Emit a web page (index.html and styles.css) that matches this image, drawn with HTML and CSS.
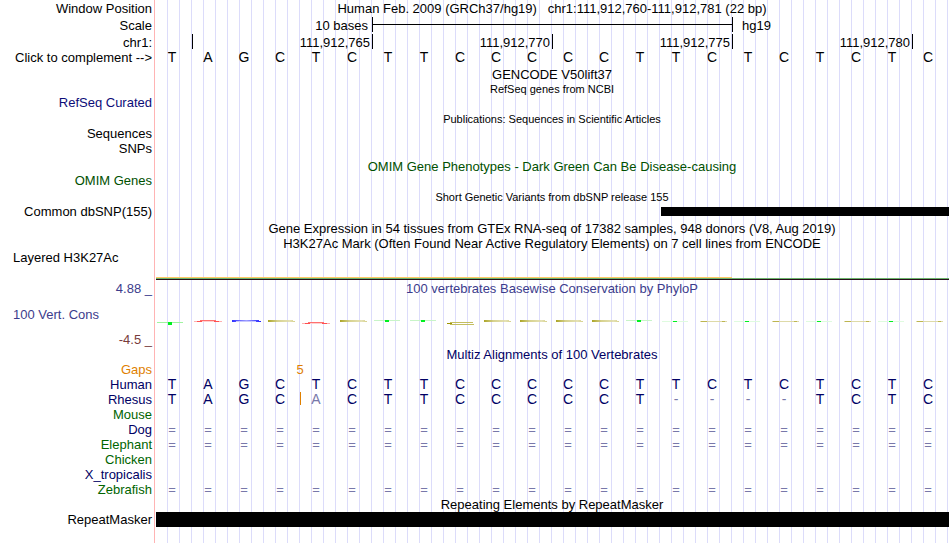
FILE: index.html
```html
<!DOCTYPE html>
<html lang="en">
<head>
<meta charset="utf-8">
<title>Human chr1:111,912,760-111,912,781 - Genome Browser</title>
<link rel="stylesheet" href="styles.css">
</head>
<body>
<main class="browser">
  <div class="row tall"><div class="label">Window Position</div><div class="track title">Human Feb. 2009 (GRCh37/hg19) &nbsp; chr1:111,912,760-111,912,781 (22 bp)</div></div>
  <div class="row tall"><div class="label">Scale</div>
    <div class="track cells"><span class="scale-text">10 bases</span><span class="scale-bar"></span><span class="scale-name">hg19</span></div></div>
  <div class="row tall"><div class="label">chr1:</div>
    <div class="track cells ruler"><span class="tick">111,912,765</span><span class="tick">111,912,770</span><span class="tick">111,912,775</span><span class="tick">111,912,780</span><span class="tick last"></span></div></div>
  <div class="row short"><button class="label" type="button">Click to complement --&gt;</button><div class="track cells bases" data-bases="TAGCTCTTCCCCCTTCTCTCTC"></div></div>

  <div class="row heading"><div class="label"></div><div class="track title">GENCODE V50lift37</div></div>
  <div class="row short"><div class="label"></div><div class="track title small">RefSeq genes from NCBI</div></div>
  <div class="row short"><div class="label refseq">RefSeq Curated</div><div class="track"></div></div>
  <div class="row heading"><div class="label"></div><div class="track title small">Publications: Sequences in Scientific Articles</div></div>
  <div class="row short"><div class="label">Sequences</div><div class="track"></div></div>
  <div class="row mid"><div class="label">SNPs</div><div class="track"></div></div>
  <div class="row heading"><div class="label"></div><div class="track title omim">OMIM Gene Phenotypes - Dark Green Can Be Disease-causing</div></div>
  <div class="row short"><div class="label omim">OMIM Genes</div><div class="track"></div></div>
  <div class="row heading"><div class="label"></div><div class="track title small">Short Genetic Variants from dbSNP release 155</div></div>
  <div class="row short"><div class="label">Common dbSNP(155)</div><div class="track cells"><span class="snp"></span></div></div>
  <div class="row heading"><div class="label"></div><div class="track title">Gene Expression in 54 tissues from GTEx RNA-seq of 17382 samples, 948 donors (V8, Aug 2019)</div></div>
  <div class="row"><div class="label"></div><div class="track title">H3K27Ac Mark (Often Found Near Active Regulatory Elements) on 7 cell lines from ENCODE</div></div>
  <div class="row short"><div class="label start">Layered H3K27Ac</div>
    <div class="track signal"><div class="cells"><span class="peak"></span></div><div class="base"></div></div></div>

  <div class="row">
    <div class="label cons"><span class="violet">4.88 _</span><span class="violet start">100 Vert. Cons</span><span class="maroon">-4.5 _</span></div>
    <div class="track phylo"><div class="title violet">100 vertebrates Basewise Conservation by PhyloP</div>
      <svg class="logo" viewBox="0 0 792 6" preserveAspectRatio="none" aria-hidden="true">
        <defs>
          <linearGradient id="fade"><stop offset="0" stop-color="#9c9400"/><stop offset=".35" stop-color="#cfc978"/><stop offset=".8" stop-color="#e0dca8"/><stop offset="1" stop-color="#cfc978"/></linearGradient>
          <linearGradient id="blue"><stop offset="0" stop-color="#3030ff"/><stop offset=".5" stop-color="#a0a0ff"/><stop offset="1" stop-color="#2020ff"/></linearGradient>
          <g id="a"><path d="M3 1h6v1H3zM21 1h6v1h-6z" fill="#ff5050"/><path d="M1 1h3v1H1zM26 1h3v1h-3z" fill="#ffb0b0"/><path d="M7 0h16v1H7z" fill="#ff7070"/><path d="M9 1h12v1H9z" fill="#ffd0d0"/></g>
          <g id="c"><path d="M3 0h25v1H3zM3 1h27v1H3z" fill="url(#fade)" opacity=".85"/></g>
          <g id="t"><path d="M1 0h26v1H1z" fill="#c8f4c8"/><path d="M12 0h4v2h-4z" fill="#00f020"/></g>
          <g id="t1"><path d="M1 1h26v1H1z" fill="#dffbdf"/><path d="M12 1h4v1h-4z" fill="#00f020"/></g>
          <g id="c1"><path d="M3 1h27v1H3z" fill="#dedaa8"/><path d="M4 1h6v1H4zM25 1h3v1h-3z" fill="#bdb550"/></g>
        </defs>
        <path d="M1 2h26v1H1z" fill="#a0f4a0"/><path d="M12 2h4v3h-4z" fill="#00f020"/>
        <use href="#a" x="37"/>
        <path d="M76 0h27v1h2v1H76z" fill="url(#blue)"/><path d="M80 1h20v1H80z" fill="#c8c8ff"/>
        <use href="#c" x="109"/><use href="#a" x="145" y="2"/><use href="#c" x="181"/>
        <use href="#t" x="217"/><use href="#t" x="253"/>
        <path d="M294 2h23v1h-23zM294 4h24v1h-24z" fill="#c4be60"/><path d="M291 3h5v1h-5z" fill="#9c9400"/>
        <use href="#c" x="325"/><use href="#c" x="361"/><use href="#c" x="397"/><use href="#c" x="433"/>
        <use href="#t" x="469"/><use href="#t1" x="505"/><use href="#c1" x="541"/><use href="#t1" x="577"/><use href="#c1" x="613"/><use href="#t1" x="649"/><use href="#c1" x="685"/><use href="#t1" x="721"/><use href="#c1" x="757"/>
      </svg></div></div>

  <div class="row"><div class="label"></div><div class="track title navy">Multiz Alignments of 100 Vertebrates</div></div>
  <table class="align">
    <colgroup><col class="names"><col span="22"></colgroup>
    <tbody>
      <tr class="gaps"><th scope="row">Gaps</th><td colspan="3"></td><td colspan="2">5</td><td colspan="17"></td></tr>
      <tr class="navy bases" data-bases="TAGCTCTTCCCCCTTCTCTCTC"><th scope="row">Human</th></tr>
      <tr class="navy bases rhesus" data-bases="TAGCACTTCCCCCT----TCTC"><th scope="row">Rhesus</th></tr>
      <tr class="green" data-bases="                      "><th scope="row">Mouse</th></tr>
      <tr class="navy" data-bases="======================"><th scope="row">Dog</th></tr>
      <tr class="green" data-bases="======================"><th scope="row">Elephant</th></tr>
      <tr class="green" data-bases="                      "><th scope="row">Chicken</th></tr>
      <tr class="navy" data-bases="                      "><th scope="row">X_tropicalis</th></tr>
      <tr class="green" data-bases="======================"><th scope="row">Zebrafish</th></tr>
    </tbody>
  </table>
  <div class="row"><div class="label"></div><div class="track title">Repeating Elements by RepeatMasker</div></div>
  <div class="row"><div class="label">RepeatMasker</div><div class="track"><div class="repeat"></div></div></div>
  <div class="row rest"><div class="label"></div><div class="track"></div></div>
</main>
<script src="script.js"></script>
</body>
</html>
```
FILE: styles.css
```css
* { box-sizing: border-box; }

body {
  margin: 0;
  background: #fff;
  color: #000;
  font: 13px/15px "Liberation Sans", Arial, sans-serif;
}

.browser {
  display: flex;
  flex-direction: column;
  min-height: 100vh;
  padding-right: 2px;
  overflow: hidden;
  background: linear-gradient(#ffb4b4, #ffb4b4) 154px 0 / 1px 100% no-repeat;
}

.row {
  display: grid;
  grid-template-columns: 156px minmax(0, 1fr);
  min-height: 15px;
  white-space: nowrap;
}
.row.tall { line-height: 17px; min-height: 17px; }
.row.mid { line-height: 16px; min-height: 16px; }
.row.short { line-height: 14px; min-height: 14px; }
.row.rest { flex: 1; }
.row.heading .title { padding-top: 2px; }

.label {
  padding: 0 4px 0 13px;
  text-align: right;
}
button.label {
  border: 0;
  background: none;
  color: inherit;
  font: inherit;
  white-space: nowrap;
}
.start { text-align: left; }

/* Three guide lines for every base */
.track {
  background: linear-gradient(to left, #dcdcfa 1px, transparent 1px) 0 0 / calc(100% / 66) 100%;
}
.title { text-align: center; }
.small { font-size: 11px; }

.cells {
  display: grid;
  grid-template-columns: repeat(22, minmax(0, 1fr));
}

.refseq { color: #0c0c78; }
.navy { color: #000064; }
.green { color: #006400; }
.omim { color: #005000; }
.violet { color: #3c3c8c; }
.maroon { color: #783c3c; }

.scale-text { grid-column: 1 / 7; padding-right: 4px; text-align: right; }
.scale-bar {
  grid-column: 7 / 17;
  height: 15px;
  margin-right: -1px;
  border: solid #000;
  border-width: 0 1px;
  background: linear-gradient(#000, #000) 0 7px / 100% 1px no-repeat;
}
.scale-name { grid-column: 17 / 23; padding-left: 10px; }

.tick {
  grid-column: span 5;
  height: 15px;
  padding-right: 2px;
  border-left: 1px solid #000;
  text-align: right;
}
.tick:first-child { grid-column: 2 / 7; }
.tick.last { grid-column: span 1; }

.bases span { padding-right: 4px; font-size: 14px; line-height: 12px; text-align: center; }

.snp {
  grid-column: 15 / 23;
  height: 9px;
  margin: 2px -1px 0 1px;
  background: #000;
}

.signal { padding-top: 26px; padding-bottom: 1px; }
.peak { grid-column: 1 / 17; height: 1px; background: #ffc864; }
.base {
  height: 2px;
  margin-right: -1px;
  border-bottom: 1px solid #28101c;
  background: #6cb46c;
}

.cons {
  display: flex;
  flex-direction: column;
  justify-content: space-between;
  height: 66px;
}
.phylo { display: flex; flex-direction: column; gap: 24px; }
.logo { display: block; width: 100%; height: 6px; }

.align {
  width: 100%;
  border-collapse: collapse;
  table-layout: fixed;
}
.names { width: 156px; }
.align th, .align td { height: 15px; padding: 0 4px 0 0; line-height: 15px; }
.align th { font-weight: normal; text-align: right; }
.align td {
  position: relative;
  background: linear-gradient(to left, #dcdcfa 1px, transparent 1px) 0 0 / calc(100% / 3) 100%;
  text-align: center;
}
.align .bases td { font-size: 14px; }
.align td[colspan="2"] { padding: 0; background-size: calc(100% / 6) 100%; }
.align td[colspan="3"] { background-size: calc(100% / 9) 100%; }
.align td[colspan="17"] { background-size: calc(100% / 51) 100%; }
.align .faint { color: #7878aa; }
.gaps { color: #e08000; }

/* Insertion marker between the fourth and fifth bases */
.rhesus td:nth-child(6)::before {
  content: "";
  position: absolute;
  left: 0;
  top: 0;
  width: 1px;
  height: 13px;
  background: #e08000;
}

.repeat { height: 15px; margin-right: -1px; background: #000; }
```
FILE: script.js
```js
const human = "TAGCTCTTCCCCCTTCTCTCTC";

for (const row of document.querySelectorAll("[data-bases]")) {
  const tag = row.tagName === "TR" ? "td" : "span";
  [...row.dataset.bases].forEach((base, i) => {
    const cell = document.createElement(tag);
    cell.textContent = base.trim();
    // Bases that differ from the human sequence are drawn lighter
    if (base !== human[i]) cell.className = "faint";
    row.append(cell);
  });
}
```
